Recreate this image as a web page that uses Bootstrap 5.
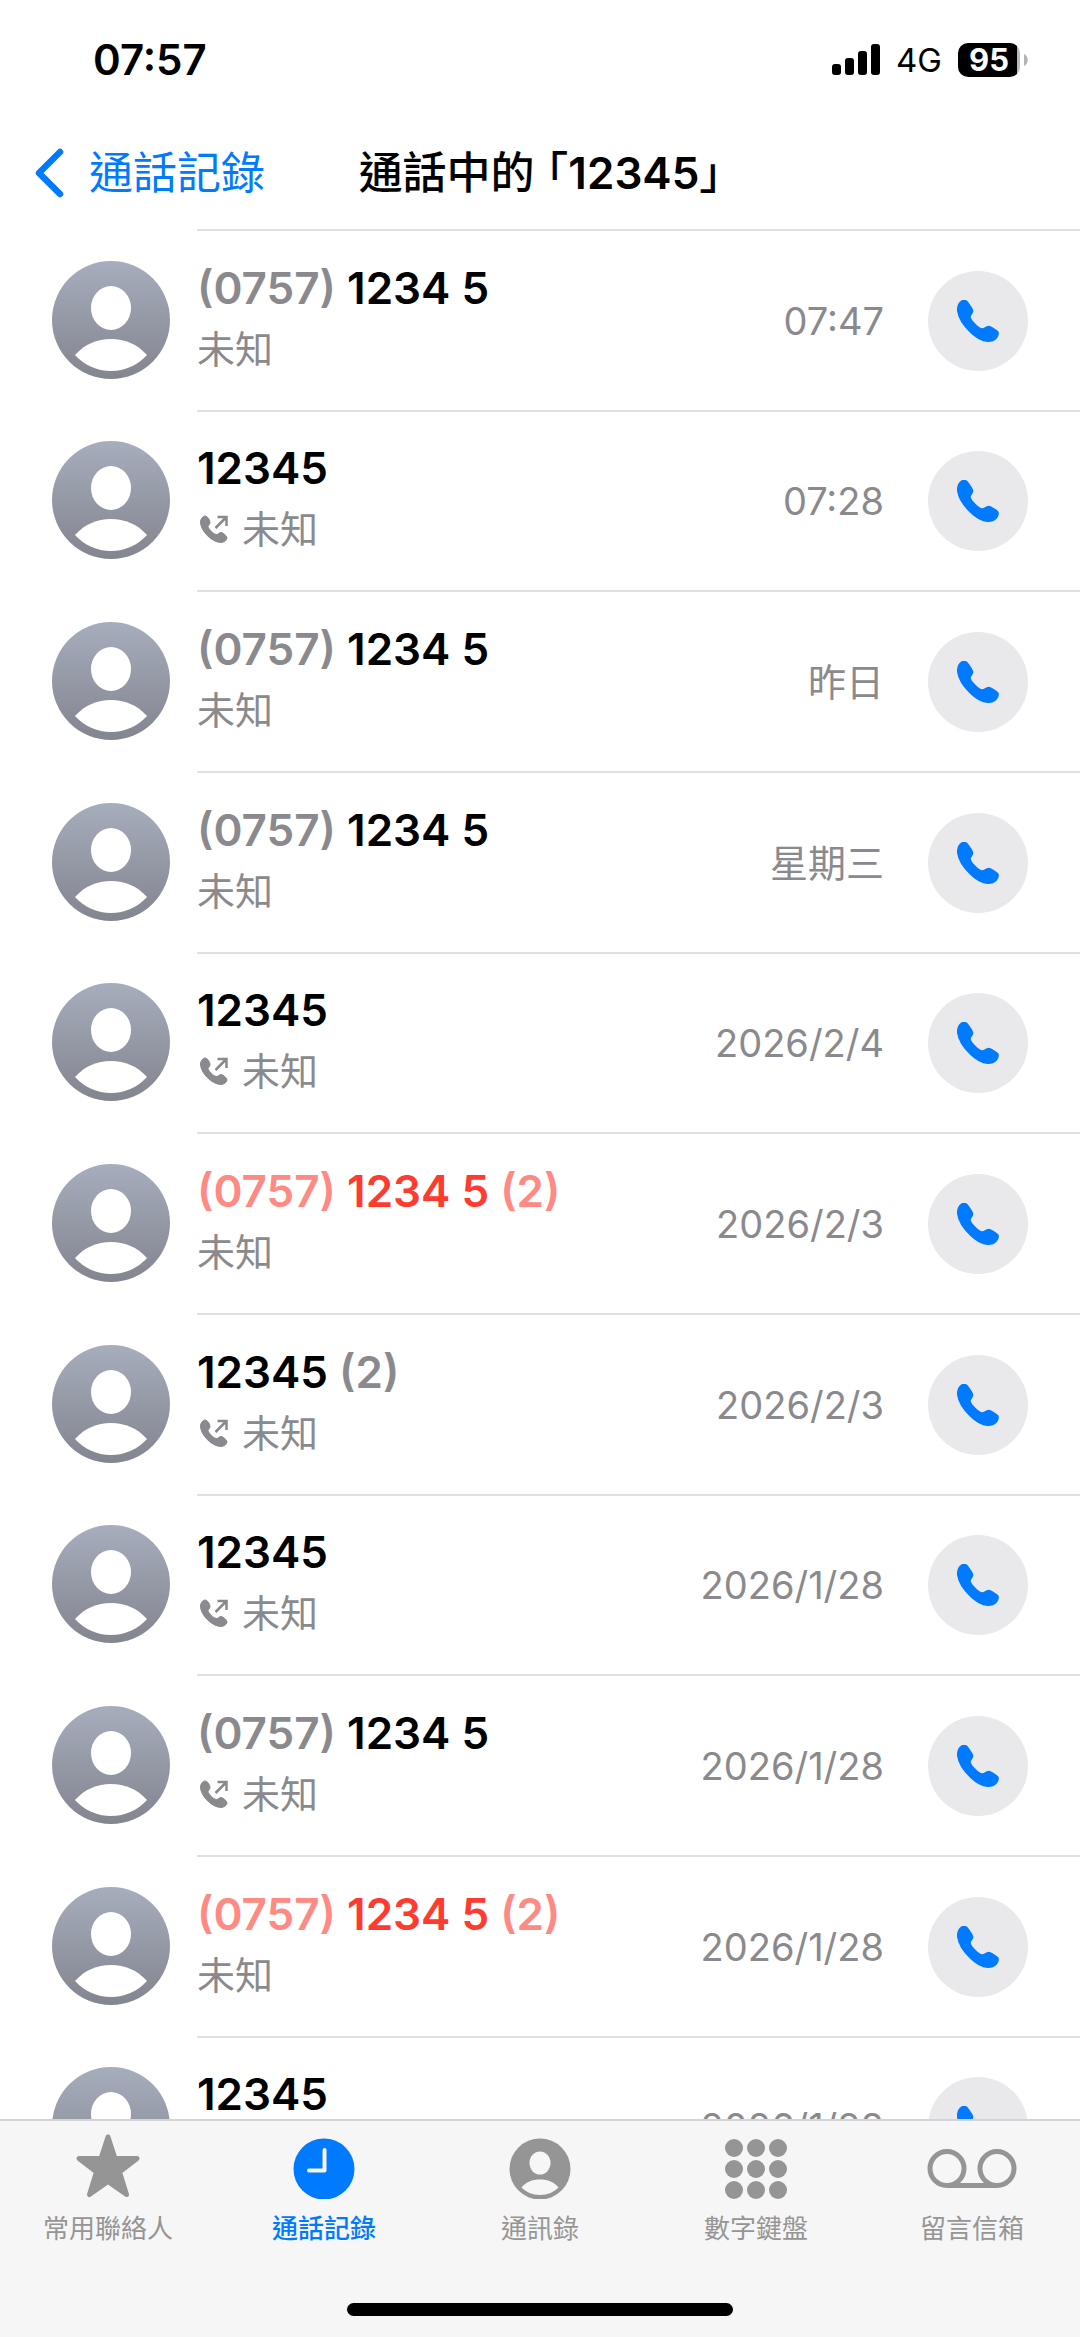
<!DOCTYPE html>
<html lang="zh-Hant-HK">
<head>
<meta charset="utf-8">
<meta name="viewport" content="width=device-width, initial-scale=1">
<title>通話記錄</title>
<link href="https://cdn.jsdelivr.net/npm/bootstrap@5.3.0/dist/css/bootstrap.min.css" rel="stylesheet">
<style>
  :root { --ios-blue: #007aff; --ios-gray: #8a8a8e; --ios-red: #ff3b30; }
  body { font-family: Inter, "Noto Sans CJK TC", sans-serif; color: #000; background: #fff; }
  .status-bar { height: 116px; padding: 4px 52px 0 93px; }
  .status-time { font-size: 42px; line-height: 48px; font-weight: 600; }
  .status-net { font-size: 33px; line-height: 40px; }
  .battery { width: 62px; height: 34px; border-radius: 10px; background: linear-gradient(90deg, #000 95%, #b9b9b9 95%); color: #fff; font-size: 31px; line-height: 34px; font-weight: 700; }
  .title-bar { height: 113px; display: grid; grid-template-columns: 1fr auto 1fr; padding: 0 34px; font-size: 44px; line-height: 64px; }
  .back-link { color: var(--ios-blue); gap: 25px; }
  .page-title { font-size: 44px; line-height: 64px; font-weight: 500; font-feature-settings: "halt"; }
  .title-num { font-weight: 600; }
  .call-item { height: 181px; padding-left: 52px; gap: 27px; }
  .call-item:nth-child(3n+2) { height: 180px; }
  .avatar { width: 118px; height: 118px; }
  .call-body { border-top: 2px solid #e0e0e2; padding-right: 52px; gap: 44px; }
  .call-name { font-size: 44px; line-height: 60px; font-weight: 600; }
  .call-sub { font-size: 38px; line-height: 62px; color: var(--ios-gray); gap: 14px; }
  .out-icon { margin-left: 3px; }
  .dim { color: var(--ios-gray); }
  .missed { color: var(--ios-red); }
  .missed .dim { color: #ff8983; }
  .call-time { font-size: 38px; line-height: 48px; color: var(--ios-gray); }
  .call-btn { width: 100px; height: 100px; background: #e9e9eb; color: var(--ios-blue); }
  .tab-bar { background: #f6f6f7; border-top: 2px solid #d4d4d6; }
  .tab-link { color: #959595; font-size: 26px; line-height: 36px; padding-top: 12px; gap: 12px; }
  .tab-link.active { color: var(--ios-blue); font-weight: 500; }
  .home-bar { width: 386px; height: 13px; background: #000; margin: 56px auto 21px; }
</style>
<script src="https://cdn.jsdelivr.net/npm/bootstrap@5.3.0/dist/js/bootstrap.bundle.min.js"></script>
</head>
<body class="vh-100 d-flex flex-column overflow-hidden">
<svg width="0" height="0" class="position-absolute" aria-hidden="true">
  <defs>
    <linearGradient id="avatarFill" x1="0" y1="0" x2="0" y2="1"><stop offset="0" stop-color="#a6adbc"/><stop offset="1" stop-color="#83858f"/></linearGradient>
    <symbol id="person" viewBox="0 0 118 118">
      <circle cx="59" cy="59" r="59" fill="url(#avatarFill)"/>
      <ellipse cx="59" cy="47" rx="20" ry="22" fill="#fff"/>
      <path d="M23 94C33 83 45 78 59 78s26 5 36 16c-9 10-22 16-36 16s-27-6-36-16z" fill="#fff"/>
    </symbol>
    <symbol id="phone" viewBox="-2 -2 126 126">
      <path fill="currentColor" stroke="currentColor" stroke-width="4" stroke-linejoin="round" d="M24 0C28 2 42 19 45 30C46 36 37 43 37 49C39 60 63 83 73 85C80 86 85 77 93 77C98 77 117 89 120 93C123 98 122 104 116 112C110 119 102 122 90 122C75 121 56 112 38 94C15 72 2 46 0 30C-1 15 6 3 14 0C18-1 22-1 24 0Z"/>
    </symbol>
    <symbol id="outgoing" viewBox="0 0 28 28">
      <path fill="currentColor" stroke="currentColor" stroke-width="1" d="M5 1C7.500 1 10 5 10 7.500C10 9.500 8 10.500 8 11.500C8.500 14 13.500 19 16 19.500C18 20 19 17.500 21 17.500C23 17.500 27 21 27 23C27 25 24 27.500 21 27.500C12 27.500.5 16 .5 7C.5 4 3 1 5 1Z"/>
      <path fill="none" stroke="currentColor" stroke-width="2.500" d="M15.500 13 26 2.500M17.500 2H26.500V11"/>
    </symbol>
  </defs>
</svg>

<header class="flex-shrink-0">
  <div class="status-bar d-flex align-items-center justify-content-between">
    <span class="status-time">07:57</span>
    <div class="d-flex align-items-center">
      <svg class="me-3" width="48" height="32" viewBox="0 0 48 32" role="img" aria-label="signal"><rect y="20" width="9" height="11" rx="3"/><rect x="13" y="14" width="9" height="17" rx="3"/><rect x="26" y="7" width="9" height="24" rx="3"/><rect x="39" width="9" height="31" rx="3"/></svg>
      <span class="status-net me-3">4G</span>
      <span class="battery text-center">95</span>
      <svg class="ms-1" width="4" height="12" viewBox="0 0 4 12" aria-hidden="true"><path d="M0 0c5 2 5 10 0 12z" fill="#b5b5b5"/></svg>
    </div>
  </div>
  <div class="title-bar align-items-center">
    <a href="#" class="back-link d-flex align-items-center text-decoration-none">
      <svg width="30" height="50" viewBox="0 0 30 50" aria-hidden="true"><path d="M26 4 5 25l21 21" fill="none" stroke="currentColor" stroke-width="6.500" stroke-linecap="round" stroke-linejoin="round"/></svg>
      <span>通話記錄</span>
    </a>
    <h1 class="page-title m-0">通話中的 「<span class="title-num">12345</span>」</h1>
  </div>
</header>

<main class="flex-fill overflow-hidden">
  <ul class="list-unstyled m-0" id="calls"></ul>
</main>

<nav class="tab-bar flex-shrink-0">
  <div class="row g-0 text-center">
    <a href="#" class="tab-link col d-flex flex-column align-items-center text-decoration-none">
      <svg width="66" height="66" viewBox="0 0 66 66" aria-hidden="true"><path d="M33 4 40 25.500H62L44.500 39 51.500 61.500 33 48.500 14.500 61.500 21.500 39 4 25.500H26Z" fill="currentColor" stroke="currentColor" stroke-width="5" stroke-linejoin="round"/></svg>
      <span>常用聯絡人</span>
    </a>
    <a href="#" class="tab-link active col d-flex flex-column align-items-center text-decoration-none" aria-current="page">
      <svg width="66" height="66" viewBox="0 0 66 66" aria-hidden="true"><circle cx="33" cy="36" r="30.500" fill="currentColor"/><path d="M33.500 17V37.500H18" fill="none" stroke="#f6f6f7" stroke-width="4" stroke-linecap="round" stroke-linejoin="round"/></svg>
      <span>通話記錄</span>
    </a>
    <a href="#" class="tab-link col d-flex flex-column align-items-center text-decoration-none">
      <svg width="66" height="66" viewBox="0 0 66 66" aria-hidden="true"><circle cx="33" cy="36" r="30.500" fill="currentColor"/><ellipse cx="33" cy="30" rx="10.500" ry="11.500" fill="#f6f6f7"/><path d="M14.500 54.500C19 49 25 46.500 33 46.500s14 2.500 18.500 8C47 59 41 62 33 62s-14-3-18.500-7.500z" fill="#f6f6f7"/></svg>
      <span>通訊錄</span>
    </a>
    <a href="#" class="tab-link col d-flex flex-column align-items-center text-decoration-none">
      <svg width="66" height="66" viewBox="0 0 66 66" fill="currentColor" aria-hidden="true"><circle cx="11" cy="15" r="9"/><circle cx="33" cy="15" r="9"/><circle cx="55" cy="15" r="9"/><circle cx="11" cy="36" r="9"/><circle cx="33" cy="36" r="9"/><circle cx="55" cy="36" r="9"/><circle cx="11" cy="57" r="9"/><circle cx="33" cy="57" r="9"/><circle cx="55" cy="57" r="9"/></svg>
      <span>數字鍵盤</span>
    </a>
    <a href="#" class="tab-link col d-flex flex-column align-items-center text-decoration-none">
      <svg width="90" height="66" viewBox="0 0 90 66" fill="none" stroke="currentColor" stroke-width="5" aria-hidden="true"><circle cx="20" cy="35.500" r="17"/><circle cx="70" cy="35.500" r="17"/><path d="M20 52.500H70"/></svg>
      <span>留言信箱</span>
    </a>
  </div>
  <div class="home-bar rounded-pill"></div>
</nav>

<script>
  // area: dialling prefix, out: outgoing call, count: grouped calls, missed: shown in red
  const calls = [
    { area: '(0757)', num: '1234 5', time: '07:47' },
    { num: '12345', out: true, time: '07:28' },
    { area: '(0757)', num: '1234 5', time: '昨日' },
    { area: '(0757)', num: '1234 5', time: '星期三' },
    { num: '12345', out: true, time: '2026/2/4' },
    { area: '(0757)', num: '1234 5', count: '(2)', missed: true, time: '2026/2/3' },
    { num: '12345', out: true, count: '(2)', time: '2026/2/3' },
    { num: '12345', out: true, time: '2026/1/28' },
    { area: '(0757)', num: '1234 5', out: true, time: '2026/1/28' },
    { area: '(0757)', num: '1234 5', count: '(2)', missed: true, time: '2026/1/28' },
    { num: '12345', out: true, time: '2026/1/28' }
  ];
  document.getElementById('calls').innerHTML = calls.map(c => `
    <li class="call-item d-flex align-items-center">
      <svg class="avatar flex-shrink-0" aria-hidden="true"><use href="#person"/></svg>
      <div class="call-body d-flex align-items-center flex-fill h-100">
        <div class="flex-fill pb-1">
          <div class="call-name ${c.missed ? 'missed' : ''}">${c.area ? `<span class="dim">${c.area}</span> ` : ''}${c.num}${c.count ? ` <span class="dim">${c.count}</span>` : ''}</div>
          <div class="call-sub d-flex align-items-center">${c.out ? '<svg class="out-icon" width="28" height="28" aria-hidden="true"><use href="#outgoing"/></svg>' : ''}<span>未知</span></div>
        </div>
        <time class="call-time">${c.time}</time>
        <button type="button" class="call-btn btn rounded-circle border-0 p-0 d-flex align-items-center justify-content-center flex-shrink-0" aria-label="致電 ${c.num}"><svg width="42" height="42" aria-hidden="true"><use href="#phone"/></svg></button>
      </div>
    </li>`).join('');
</script>
</body>
</html>
